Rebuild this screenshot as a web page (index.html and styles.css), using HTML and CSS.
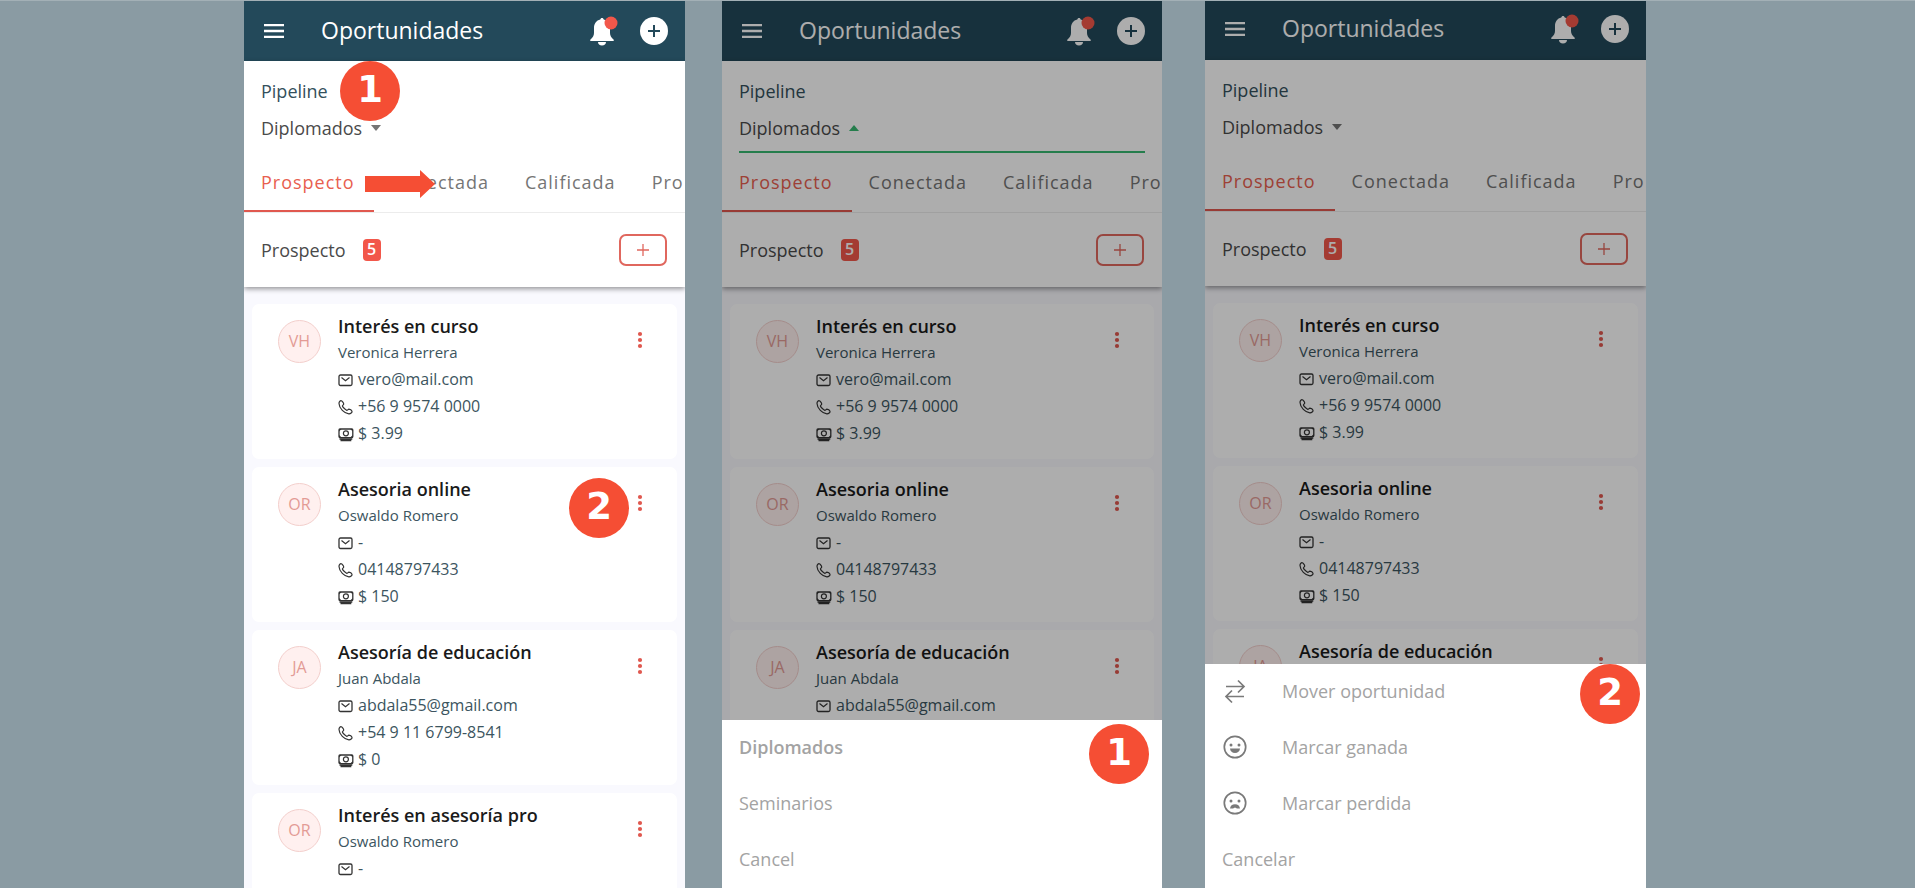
FILE: index.html
```html
<!DOCTYPE html>
<html lang="es">
<head>
    <meta charset="UTF-8">
    <meta name="viewport" content="width=device-width, initial-scale=1.0">
    <title>Oportunidades</title>
    <link rel="stylesheet" href="styles.css">
</head>
<body>
    <!-- Iconos compartidos -->
    <svg class="sprite" aria-hidden="true">
        <symbol id="i-menu" viewBox="0 0 20 14">
            <path d="M0 1h20M0 7h20M0 13h20" stroke="currentColor" stroke-width="2.400"/>
        </symbol>
        <symbol id="i-bell" viewBox="0 0 28 30">
            <path fill="currentColor" d="M12 2c.9 0 1.6.6 1.7 1.500 4 .9 6.300 4.300 6.300 8.500v5c0 2.500 1.200 4.500 3.500 6.500.8.800.5 1.500-.5 1.500H1c-1 0-1.300-.7-.5-1.500C2.800 21.500 4 19.500 4 17v-5c0-4.200 2.300-7.600 6.300-8.500C10.400 2.600 11.100 2 12 2zM8 26h8c0 2-1.600 3.500-4 3.500S8 28 8 26z"/>
            <circle cx="21" cy="7" r="6.500" fill="#f2574a"/>
        </symbol>
        <symbol id="i-plus-circle" viewBox="0 0 28 28">
            <circle cx="14" cy="14" r="14" fill="currentColor"/>
            <path d="M14 8v12M8 14h12" stroke="#23495a" stroke-width="2"/>
        </symbol>
        <symbol id="i-plus" viewBox="0 0 12 12">
            <path d="M6 0v12M0 6h12" stroke="currentColor" stroke-width="1.300"/>
        </symbol>
        <symbol id="i-dots" viewBox="0 0 6 18">
            <circle cx="3" cy="3" r="2.100" fill="currentColor"/>
            <circle cx="3" cy="9" r="2.100" fill="currentColor"/>
            <circle cx="3" cy="15" r="2.100" fill="currentColor"/>
        </symbol>
        <symbol id="i-mail" viewBox="0 0 16 16">
            <rect x="1" y="3" width="13" height="10.500" rx="1.500" fill="none" stroke="currentColor" stroke-width="1.300"/>
            <path d="M3.500 5.500l4 3.200 4-3.200" fill="none" stroke="currentColor" stroke-width="1.200"/>
        </symbol>
        <symbol id="i-phone" viewBox="0 0 16 16">
            <path d="M3.400 1.800C2.600 1.200.9 2.600 1 4.500c.2 4.900 5.400 9.900 9.800 10.300 1.800.1 3.500-1.400 3.200-2.500-.3-.7-2.200-2-3.100-2.100-.8 0-1.400 1.200-2 1.200-1.100-.3-4.200-3.200-4.500-4.400 0-.7 1.300-1.200 1.300-2 0-.9-1.500-2.900-2.300-3.200z" fill="none" stroke="currentColor" stroke-width="1.200" stroke-linejoin="round"/>
        </symbol>
        <symbol id="i-cash" viewBox="0 0 16 16">
            <rect x="1" y="3" width="13.800" height="8.600" rx="1" fill="none" stroke="currentColor" stroke-width="1.300"/>
            <path d="M1 3h2.600L1 5.600zM14.800 3h-2.600l2.600 2.600zM1 11.600h2.600L1 9zM14.800 11.600h-2.600L14.800 9z" fill="currentColor"/>
            <circle cx="7.900" cy="7.300" r="2.500" fill="none" stroke="currentColor" stroke-width="1.200"/>
            <path d="M1.500 12.900h12.800M2.500 14.500h10.800" stroke="currentColor" stroke-width="1.500"/>
        </symbol>
        <symbol id="i-swap" viewBox="0 0 26 26">
            <path d="M4 8.500h18M16 2.500l6 6-6 6M22 18.500H4M10 12.500l-6 6 6 6" fill="none" stroke="currentColor" stroke-width="1.700"/>
        </symbol>
        <symbol id="i-happy" viewBox="0 0 26 26">
            <circle cx="13" cy="13" r="10.700" fill="none" stroke="currentColor" stroke-width="1.700"/>
            <circle cx="9" cy="11" r="1.500" fill="currentColor"/>
            <circle cx="17" cy="11" r="1.500" fill="currentColor"/>
            <path d="M8 14.500h10c-.3 2.900-2.200 4.500-5 4.500s-4.700-1.600-5-4.500z" fill="currentColor"/>
        </symbol>
        <symbol id="i-sad" viewBox="0 0 26 26">
            <circle cx="13" cy="13" r="10.700" fill="none" stroke="currentColor" stroke-width="1.700"/>
            <circle cx="9" cy="11" r="1.500" fill="currentColor"/>
            <circle cx="17" cy="11" r="1.500" fill="currentColor"/>
            <path d="M8 18.500c.3-2.900 2.200-4.300 5-4.300s4.700 1.400 5 4.300h-3l-2-1-2 1z" fill="currentColor"/>
        </symbol>
    </svg>

    <main class="stage">
        <!-- Pantalla 1: lista -->
        <section class="phone phone-list">
            <header class="topbar">
                <button class="icon-btn" aria-label="Menú"><svg class="icon-menu"><use href="#i-menu"/></svg></button>
                <h1>Oportunidades</h1>
                <button class="icon-btn" aria-label="Notificaciones"><svg class="icon-bell"><use href="#i-bell"/></svg></button>
                <button class="icon-btn" aria-label="Crear"><svg class="icon-create"><use href="#i-plus-circle"/></svg></button>
            </header>
            <div class="panel">
                <div class="filter">
                    <label for="pipeline1">Pipeline</label>
                    <div class="select-row">
                        <select id="pipeline1"><option>Diplomados</option><option>Seminarios</option></select>
                        <span class="caret"></span>
                    </div>
                    <span class="marker marker-pipeline">1</span>
                </div>
                <nav class="tabs">
                    <a href="#" class="active">Prospecto</a>
                    <a href="#">Conectada</a>
                    <a href="#">Calificada</a>
                    <a href="#">Pro</a>
                    <svg class="arrow" viewBox="0 0 70 28"><path d="M0 6h55V0l15 14-15 14v-6H0z" fill="#f54e34"/></svg>
                </nav>
                <div class="stage-row">
                    <h2>Prospecto</h2>
                    <span class="count">5</span>
                    <button class="add-btn" aria-label="Agregar"><svg><use href="#i-plus"/></svg></button>
                </div>
            </div>
            <div class="cards">
                <article class="card">
                    <span class="avatar">VH</span>
                    <div class="info">
                        <h3>Interés en curso</h3>
                        <p class="name">Veronica Herrera</p>
                        <p><svg><use href="#i-mail"/></svg>vero@mail.com</p>
                        <p><svg><use href="#i-phone"/></svg>+56 9 9574 0000</p>
                        <p><svg><use href="#i-cash"/></svg>$ 3.99</p>
                    </div>
                    <button class="more" aria-label="Opciones"><svg><use href="#i-dots"/></svg></button>
                </article>
                <article class="card">
                    <span class="avatar">OR</span>
                    <div class="info">
                        <h3>Asesoria online</h3>
                        <p class="name">Oswaldo Romero</p>
                        <p><svg><use href="#i-mail"/></svg>-</p>
                        <p><svg><use href="#i-phone"/></svg>04148797433</p>
                        <p><svg><use href="#i-cash"/></svg>$ 150</p>
                    </div>
                    <button class="more" aria-label="Opciones"><svg><use href="#i-dots"/></svg></button>
                    <span class="marker marker-card">2</span>
                </article>
                <article class="card">
                    <span class="avatar">JA</span>
                    <div class="info">
                        <h3>Asesoría de educación</h3>
                        <p class="name">Juan Abdala</p>
                        <p><svg><use href="#i-mail"/></svg>abdala55@gmail.com</p>
                        <p><svg><use href="#i-phone"/></svg>+54 9 11 6799-8541</p>
                        <p><svg><use href="#i-cash"/></svg>$ 0</p>
                    </div>
                    <button class="more" aria-label="Opciones"><svg><use href="#i-dots"/></svg></button>
                </article>
                <article class="card">
                    <span class="avatar">OR</span>
                    <div class="info">
                        <h3>Interés en asesoría pro</h3>
                        <p class="name">Oswaldo Romero</p>
                        <p><svg><use href="#i-mail"/></svg>-</p>
                    </div>
                    <button class="more" aria-label="Opciones"><svg><use href="#i-dots"/></svg></button>
                </article>
            </div>
        </section>

        <!-- Pantalla 2: selector de pipeline -->
        <section class="phone phone-pipeline">
            <header class="topbar">
                <button class="icon-btn" aria-label="Menú"><svg class="icon-menu"><use href="#i-menu"/></svg></button>
                <h1>Oportunidades</h1>
                <button class="icon-btn" aria-label="Notificaciones"><svg class="icon-bell"><use href="#i-bell"/></svg></button>
                <button class="icon-btn" aria-label="Crear"><svg class="icon-create"><use href="#i-plus-circle"/></svg></button>
            </header>
            <div class="panel">
                <div class="filter">
                    <label for="pipeline2">Pipeline</label>
                    <div class="select-row open">
                        <select id="pipeline2"><option>Diplomados</option><option>Seminarios</option></select>
                        <span class="caret"></span>
                    </div>
                </div>
                <nav class="tabs">
                    <a href="#" class="active">Prospecto</a>
                    <a href="#">Conectada</a>
                    <a href="#">Calificada</a>
                    <a href="#">Pro</a>
                </nav>
                <div class="stage-row">
                    <h2>Prospecto</h2>
                    <span class="count">5</span>
                    <button class="add-btn" aria-label="Agregar"><svg><use href="#i-plus"/></svg></button>
                </div>
            </div>
            <div class="cards">
                <article class="card">
                    <span class="avatar">VH</span>
                    <div class="info">
                        <h3>Interés en curso</h3>
                        <p class="name">Veronica Herrera</p>
                        <p><svg><use href="#i-mail"/></svg>vero@mail.com</p>
                        <p><svg><use href="#i-phone"/></svg>+56 9 9574 0000</p>
                        <p><svg><use href="#i-cash"/></svg>$ 3.99</p>
                    </div>
                    <button class="more" aria-label="Opciones"><svg><use href="#i-dots"/></svg></button>
                </article>
                <article class="card">
                    <span class="avatar">OR</span>
                    <div class="info">
                        <h3>Asesoria online</h3>
                        <p class="name">Oswaldo Romero</p>
                        <p><svg><use href="#i-mail"/></svg>-</p>
                        <p><svg><use href="#i-phone"/></svg>04148797433</p>
                        <p><svg><use href="#i-cash"/></svg>$ 150</p>
                    </div>
                    <button class="more" aria-label="Opciones"><svg><use href="#i-dots"/></svg></button>
                </article>
                <article class="card">
                    <span class="avatar">JA</span>
                    <div class="info">
                        <h3>Asesoría de educación</h3>
                        <p class="name">Juan Abdala</p>
                        <p><svg><use href="#i-mail"/></svg>abdala55@gmail.com</p>
                    </div>
                    <button class="more" aria-label="Opciones"><svg><use href="#i-dots"/></svg></button>
                </article>
            </div>
            <div class="overlay"></div>
            <div class="sheet">
                <button class="selected">Diplomados</button>
                <button>Seminarios</button>
                <button>Cancel</button>
                <span class="marker marker-sheet">1</span>
            </div>
        </section>

        <!-- Pantalla 3: acciones de la oportunidad -->
        <section class="phone phone-actions">
            <header class="topbar">
                <button class="icon-btn" aria-label="Menú"><svg class="icon-menu"><use href="#i-menu"/></svg></button>
                <h1>Oportunidades</h1>
                <button class="icon-btn" aria-label="Notificaciones"><svg class="icon-bell"><use href="#i-bell"/></svg></button>
                <button class="icon-btn" aria-label="Crear"><svg class="icon-create"><use href="#i-plus-circle"/></svg></button>
            </header>
            <div class="panel">
                <div class="filter">
                    <label for="pipeline3">Pipeline</label>
                    <div class="select-row">
                        <select id="pipeline3"><option>Diplomados</option><option>Seminarios</option></select>
                        <span class="caret"></span>
                    </div>
                </div>
                <nav class="tabs">
                    <a href="#" class="active">Prospecto</a>
                    <a href="#">Conectada</a>
                    <a href="#">Calificada</a>
                    <a href="#">Pro</a>
                </nav>
                <div class="stage-row">
                    <h2>Prospecto</h2>
                    <span class="count">5</span>
                    <button class="add-btn" aria-label="Agregar"><svg><use href="#i-plus"/></svg></button>
                </div>
            </div>
            <div class="cards">
                <article class="card">
                    <span class="avatar">VH</span>
                    <div class="info">
                        <h3>Interés en curso</h3>
                        <p class="name">Veronica Herrera</p>
                        <p><svg><use href="#i-mail"/></svg>vero@mail.com</p>
                        <p><svg><use href="#i-phone"/></svg>+56 9 9574 0000</p>
                        <p><svg><use href="#i-cash"/></svg>$ 3.99</p>
                    </div>
                    <button class="more" aria-label="Opciones"><svg><use href="#i-dots"/></svg></button>
                </article>
                <article class="card">
                    <span class="avatar">OR</span>
                    <div class="info">
                        <h3>Asesoria online</h3>
                        <p class="name">Oswaldo Romero</p>
                        <p><svg><use href="#i-mail"/></svg>-</p>
                        <p><svg><use href="#i-phone"/></svg>04148797433</p>
                        <p><svg><use href="#i-cash"/></svg>$ 150</p>
                    </div>
                    <button class="more" aria-label="Opciones"><svg><use href="#i-dots"/></svg></button>
                </article>
                <article class="card">
                    <span class="avatar">JA</span>
                    <div class="info">
                        <h3>Asesoría de educación</h3>
                    </div>
                    <button class="more" aria-label="Opciones"><svg><use href="#i-dots"/></svg></button>
                </article>
            </div>
            <div class="overlay"></div>
            <div class="sheet">
                <button><svg><use href="#i-swap"/></svg>Mover oportunidad</button>
                <button><svg><use href="#i-happy"/></svg>Marcar ganada</button>
                <button><svg><use href="#i-sad"/></svg>Marcar perdida</button>
                <button>Cancelar</button>
                <span class="marker marker-action">2</span>
            </div>
        </section>
    </main>
</body>
</html>
```
FILE: styles.css
```css
* {
    box-sizing: border-box;
}

body {
    margin: 0;
    background: #8a9ba3;
    border-top: 1px solid #a3b0b6;
    font-family: "Open Sans", "Noto Sans", sans-serif;
    font-size: 18px;
    color: #4a4a4a;
    height: 100vh;
    overflow: hidden;
}

h1, h2, h3, p {
    margin: 0;
    font-weight: normal;
}

button, select {
    font: inherit;
    color: inherit;
    background: none;
    border: none;
    padding: 0;
    cursor: pointer;
}

svg {
    display: block;
    flex-shrink: 0;
}

.sprite {
    display: none;
}

/* Tres pantallas en fila */
.stage {
    display: grid;
    grid-template-columns: 244fr 441fr 37fr 440fr 43fr 441fr 269fr;
    height: 100%;
}

.phone {
    position: relative;
    overflow: hidden;
    min-width: 0;
    background: #f9f9fe;
}

.phone-list {
    grid-column: 2;
}

.phone-pipeline {
    grid-column: 4;
}

.phone-actions {
    grid-column: 6;
}

/* Barra superior */
.topbar {
    display: flex;
    align-items: center;
    height: 60px;
    padding: 0 17px 0 20px;
    background: #23495a;
    color: #fff;
}

.phone-actions .topbar {
    height: 59px;
    padding-bottom: 3px;
}

.topbar h1 {
    flex: 1;
    margin-left: 37px;
    padding-bottom: 2px;
    font-size: 23px;
    line-height: 32px;
}

.icon-menu {
    width: 20px;
    height: 14px;
}

.icon-bell {
    width: 28px;
    height: 30px;
    margin-right: 22px;
}

.icon-create {
    width: 28px;
    height: 28px;
}

/* Panel de filtro y pestañas */
.panel {
    position: relative;
    background: #fff;
    box-shadow: 0 2px 5px rgba(0, 0, 0, 0.4);
}

.filter {
    position: relative;
    padding: 16px 17px 0;
}

.filter label {
    display: block;
    line-height: 28px;
    color: #34505c;
}

.select-row {
    display: flex;
    align-items: center;
    gap: 8px;
    height: 48px;
    border-bottom: 2px solid transparent;
}

.select-row.open {
    border-color: #37b871;
}

.select-row select {
    appearance: none;
    outline: none;
}

.caret {
    border: 5px solid transparent;
    border-top: 6px solid #757575;
    border-bottom: 0;
}

.open .caret {
    border-top: 0;
    border-bottom: 6px solid #37b871;
}

.tabs {
    position: relative;
    display: flex;
    height: 60px;
    border-bottom: 1px solid #ececec;
    overflow: hidden;
}

.tabs a {
    padding: 0 19px 0 17px;
    line-height: 58px;
    letter-spacing: 1px;
    color: #757575;
    text-decoration: none;
}

.tabs .active {
    color: #e8604f;
    border-bottom: 2px solid #e0584f;
}

.arrow {
    position: absolute;
    left: 121px;
    top: 17px;
    width: 70px;
    height: 28px;
}

.stage-row {
    display: flex;
    align-items: center;
    height: 74px;
    padding: 0 18px 0 17px;
}

.stage-row h2 {
    font-size: 18px;
}

.count {
    width: 18px;
    height: 22px;
    margin-left: 17px;
    border-radius: 4px;
    background: #f2574a;
    color: #fff;
    font-size: 16px;
    font-weight: 600;
    line-height: 21px;
    text-align: center;
}

.add-btn {
    display: flex;
    align-items: center;
    justify-content: center;
    width: 48px;
    height: 32px;
    margin-left: auto;
    border: 2px solid #e0675e;
    border-radius: 7px;
    color: #e0675e;
}

.add-btn svg {
    width: 12px;
    height: 12px;
}

/* Tarjetas */
.cards {
    display: flex;
    flex-direction: column;
    gap: 8px;
    padding: 17px 8px 0;
}

.card {
    position: relative;
    display: flex;
    align-items: flex-start;
    min-height: 155px;
    padding: 9px 34px 0 26px;
    border-radius: 7px;
    background: #fff;
}

.avatar {
    width: 43px;
    height: 43px;
    margin: 7px 17px 0 0;
    border: 1px solid #f3cfcc;
    border-radius: 50%;
    background: #fff0ef;
    color: #e39b95;
    font-size: 16px;
    line-height: 41px;
    text-align: center;
}

.info {
    flex: 1;
}

.info h3 {
    font-size: 18px;
    font-weight: 600;
    line-height: 26px;
    color: #1a1a1a;
}

.info p {
    display: flex;
    align-items: center;
    gap: 4px;
    font-size: 16px;
    line-height: 27px;
    color: #3c5560;
}

.info .name {
    font-size: 15px;
}

.info svg {
    width: 16px;
    height: 16px;
    color: #333;
}

.more {
    margin-top: 18px;
    color: #e0584f;
}

.more svg {
    width: 6px;
    height: 18px;
}

/* Menú inferior */
.overlay {
    position: absolute;
    inset: 0;
    background: rgba(0, 0, 0, 0.32);
}

.sheet {
    position: absolute;
    left: 0;
    right: 0;
    bottom: 0;
    background: #fff;
}

.sheet button {
    display: flex;
    align-items: center;
    gap: 34px;
    width: 100%;
    height: 56px;
    padding: 0 0 2px 17px;
    color: #a3a3a3;
}

.sheet .selected {
    font-weight: 600;
}

.sheet svg {
    width: 26px;
    height: 26px;
    color: #7a7a7a;
}

/* Marcadores numerados */
.marker {
    position: absolute;
    width: 60px;
    height: 60px;
    border-radius: 50%;
    background: #f54e34;
    color: #fff;
    font-family: "DejaVu Sans", sans-serif;
    font-size: 37px;
    font-weight: bold;
    line-height: 58px;
    text-align: center;
}

.marker-pipeline {
    left: 96px;
    top: 0;
}

.marker-card {
    right: 48px;
    top: 11px;
}

.marker-sheet {
    right: 13px;
    top: 4px;
}

.marker-action {
    right: 6px;
    top: 0;
}
```
